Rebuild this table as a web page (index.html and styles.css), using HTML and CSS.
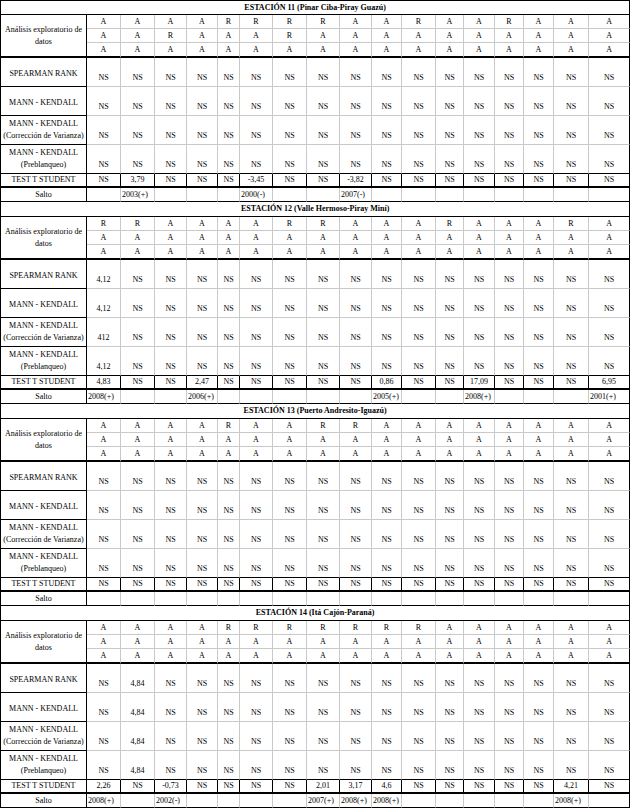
FILE: index.html
```html
<!DOCTYPE html>
<html lang="es">
<head>
<meta charset="utf-8">
<title>Estaciones</title>
<link rel="stylesheet" href="styles.css">
</head>
<body>
<table class="sheet">
<colgroup><col class="w86"><col class="w34"><col class="w34"><col class="w32"><col class="w31"><col class="w22"><col class="w33"><col class="w34"><col class="w33"><col class="w32"><col class="w30"><col class="w34"><col class="w28"><col class="w31"><col class="w29"><col class="w30"><col class="w35"><col class="w41"></colgroup>
<tbody>
<!-- ESTACIÓN 11 -->
<tr class="title first"><td colspan="18">ESTACIÓN 11 (Pinar Ciba-Piray Guazú)</td></tr>
<tr class="ar"><td class="lab span" rowspan="3">Análisis exploratorio de datos</td><td>A</td><td>A</td><td>A</td><td>A</td><td>R</td><td>R</td><td>R</td><td>R</td><td>A</td><td>A</td><td>R</td><td>A</td><td>A</td><td>R</td><td>A</td><td>A</td><td>A</td></tr>
<tr class="ar"><td>A</td><td>A</td><td>R</td><td>A</td><td>A</td><td>A</td><td>R</td><td>A</td><td>A</td><td>A</td><td>A</td><td>A</td><td>A</td><td>A</td><td>A</td><td>A</td><td>A</td></tr>
<tr class="ar ar3"><td>A</td><td>A</td><td>A</td><td>A</td><td>A</td><td>A</td><td>A</td><td>A</td><td>A</td><td>A</td><td>A</td><td>A</td><td>A</td><td>A</td><td>A</td><td>A</td><td>A</td></tr>
<tr class="mr"><td class="lab one">SPEARMAN RANK</td><td>NS</td><td>NS</td><td>NS</td><td>NS</td><td>NS</td><td>NS</td><td>NS</td><td>NS</td><td>NS</td><td>NS</td><td>NS</td><td>NS</td><td>NS</td><td>NS</td><td>NS</td><td>NS</td><td>NS</td></tr>
<tr class="mr"><td class="lab one">MANN - KENDALL</td><td>NS</td><td>NS</td><td>NS</td><td>NS</td><td>NS</td><td>NS</td><td>NS</td><td>NS</td><td>NS</td><td>NS</td><td>NS</td><td>NS</td><td>NS</td><td>NS</td><td>NS</td><td>NS</td><td>NS</td></tr>
<tr class="mr"><td class="lab">MANN - KENDALL<br>(Corrección de Varianza)</td><td>NS</td><td>NS</td><td>NS</td><td>NS</td><td>NS</td><td>NS</td><td>NS</td><td>NS</td><td>NS</td><td>NS</td><td>NS</td><td>NS</td><td>NS</td><td>NS</td><td>NS</td><td>NS</td><td>NS</td></tr>
<tr class="mr pb"><td class="lab">MANN - KENDALL<br>(Preblanqueo)</td><td>NS</td><td>NS</td><td>NS</td><td>NS</td><td>NS</td><td>NS</td><td>NS</td><td>NS</td><td>NS</td><td>NS</td><td>NS</td><td>NS</td><td>NS</td><td>NS</td><td>NS</td><td>NS</td><td>NS</td></tr>
<tr class="tt"><td class="lab">TEST T STUDENT</td><td>NS</td><td>3,79</td><td>NS</td><td>NS</td><td>NS</td><td>-3,45</td><td>NS</td><td>NS</td><td>-3,82</td><td>NS</td><td>NS</td><td>NS</td><td>NS</td><td>NS</td><td>NS</td><td>NS</td><td>NS</td></tr>
<tr class="sa"><td class="lab">Salto</td><td></td><td>2003(+)</td><td></td><td></td><td></td><td>2000(-)</td><td></td><td></td><td>2007(-)</td><td></td><td></td><td></td><td></td><td></td><td></td><td></td><td></td></tr>
<!-- ESTACIÓN 12 -->
<tr class="title"><td colspan="18">ESTACIÓN 12 (Valle Hermoso-Piray Miní)</td></tr>
<tr class="ar"><td class="lab span" rowspan="3">Análisis exploratorio de datos</td><td>R</td><td>R</td><td>A</td><td>A</td><td>A</td><td>A</td><td>R</td><td>R</td><td>A</td><td>A</td><td>A</td><td>R</td><td>A</td><td>A</td><td>A</td><td>R</td><td>A</td></tr>
<tr class="ar"><td>A</td><td>A</td><td>A</td><td>A</td><td>A</td><td>A</td><td>A</td><td>A</td><td>A</td><td>A</td><td>A</td><td>A</td><td>A</td><td>A</td><td>A</td><td>A</td><td>A</td></tr>
<tr class="ar ar3"><td>A</td><td>A</td><td>A</td><td>A</td><td>A</td><td>A</td><td>A</td><td>A</td><td>A</td><td>A</td><td>A</td><td>A</td><td>A</td><td>A</td><td>A</td><td>A</td><td>A</td></tr>
<tr class="mr"><td class="lab one">SPEARMAN RANK</td><td>4,12</td><td>NS</td><td>NS</td><td>NS</td><td>NS</td><td>NS</td><td>NS</td><td>NS</td><td>NS</td><td>NS</td><td>NS</td><td>NS</td><td>NS</td><td>NS</td><td>NS</td><td>NS</td><td>NS</td></tr>
<tr class="mr"><td class="lab one">MANN - KENDALL</td><td>4,12</td><td>NS</td><td>NS</td><td>NS</td><td>NS</td><td>NS</td><td>NS</td><td>NS</td><td>NS</td><td>NS</td><td>NS</td><td>NS</td><td>NS</td><td>NS</td><td>NS</td><td>NS</td><td>NS</td></tr>
<tr class="mr"><td class="lab">MANN - KENDALL<br>(Corrección de Varianza)</td><td>412</td><td>NS</td><td>NS</td><td>NS</td><td>NS</td><td>NS</td><td>NS</td><td>NS</td><td>NS</td><td>NS</td><td>NS</td><td>NS</td><td>NS</td><td>NS</td><td>NS</td><td>NS</td><td>NS</td></tr>
<tr class="mr pb"><td class="lab">MANN - KENDALL<br>(Preblanqueo)</td><td>4,12</td><td>NS</td><td>NS</td><td>NS</td><td>NS</td><td>NS</td><td>NS</td><td>NS</td><td>NS</td><td>NS</td><td>NS</td><td>NS</td><td>NS</td><td>NS</td><td>NS</td><td>NS</td><td>NS</td></tr>
<tr class="tt"><td class="lab">TEST T STUDENT</td><td>4,83</td><td>NS</td><td>NS</td><td>2,47</td><td>NS</td><td>NS</td><td>NS</td><td>NS</td><td>NS</td><td>0,86</td><td>NS</td><td>NS</td><td>17,09</td><td>NS</td><td>NS</td><td>NS</td><td>6,95</td></tr>
<tr class="sa"><td class="lab">Salto</td><td>2008(+)</td><td></td><td></td><td>2006(+)</td><td></td><td></td><td></td><td></td><td></td><td>2005(+)</td><td></td><td></td><td>2008(+)</td><td></td><td></td><td></td><td>2001(+)</td></tr>
<!-- ESTACIÓN 13 -->
<tr class="title"><td colspan="18">ESTACIÓN 13 (Puerto Andresito-Iguazú)</td></tr>
<tr class="ar"><td class="lab span" rowspan="3">Análisis exploratorio de datos</td><td>A</td><td>A</td><td>A</td><td>A</td><td>R</td><td>A</td><td>A</td><td>R</td><td>R</td><td>A</td><td>A</td><td>A</td><td>A</td><td>A</td><td>A</td><td>A</td><td>A</td></tr>
<tr class="ar"><td>A</td><td>A</td><td>A</td><td>A</td><td>A</td><td>A</td><td>A</td><td>A</td><td>A</td><td>A</td><td>A</td><td>A</td><td>A</td><td>A</td><td>A</td><td>A</td><td>A</td></tr>
<tr class="ar ar3"><td>A</td><td>A</td><td>A</td><td>A</td><td>A</td><td>A</td><td>A</td><td>A</td><td>A</td><td>A</td><td>A</td><td>A</td><td>A</td><td>A</td><td>A</td><td>A</td><td>A</td></tr>
<tr class="mr"><td class="lab one">SPEARMAN RANK</td><td>NS</td><td>NS</td><td>NS</td><td>NS</td><td>NS</td><td>NS</td><td>NS</td><td>NS</td><td>NS</td><td>NS</td><td>NS</td><td>NS</td><td>NS</td><td>NS</td><td>NS</td><td>NS</td><td>NS</td></tr>
<tr class="mr"><td class="lab one">MANN - KENDALL</td><td>NS</td><td>NS</td><td>NS</td><td>NS</td><td>NS</td><td>NS</td><td>NS</td><td>NS</td><td>NS</td><td>NS</td><td>NS</td><td>NS</td><td>NS</td><td>NS</td><td>NS</td><td>NS</td><td>NS</td></tr>
<tr class="mr"><td class="lab">MANN - KENDALL<br>(Corrección de Varianza)</td><td>NS</td><td>NS</td><td>NS</td><td>NS</td><td>NS</td><td>NS</td><td>NS</td><td>NS</td><td>NS</td><td>NS</td><td>NS</td><td>NS</td><td>NS</td><td>NS</td><td>NS</td><td>NS</td><td>NS</td></tr>
<tr class="mr pb"><td class="lab">MANN - KENDALL<br>(Preblanqueo)</td><td>NS</td><td>NS</td><td>NS</td><td>NS</td><td>NS</td><td>NS</td><td>NS</td><td>NS</td><td>NS</td><td>NS</td><td>NS</td><td>NS</td><td>NS</td><td>NS</td><td>NS</td><td>NS</td><td>NS</td></tr>
<tr class="tt"><td class="lab">TEST T STUDENT</td><td>NS</td><td>NS</td><td>NS</td><td>NS</td><td>NS</td><td>NS</td><td>NS</td><td>NS</td><td>NS</td><td>NS</td><td>NS</td><td>NS</td><td>NS</td><td>NS</td><td>NS</td><td>NS</td><td>NS</td></tr>
<tr class="sa"><td class="lab">Salto</td><td></td><td></td><td></td><td></td><td></td><td></td><td></td><td></td><td></td><td></td><td></td><td></td><td></td><td></td><td></td><td></td><td></td></tr>
<!-- ESTACIÓN 14 -->
<tr class="title"><td colspan="18">ESTACIÓN 14 (Itá Cajón-Paraná)</td></tr>
<tr class="ar"><td class="lab span" rowspan="3">Análisis exploratorio de datos</td><td>A</td><td>A</td><td>A</td><td>A</td><td>R</td><td>R</td><td>R</td><td>R</td><td>R</td><td>R</td><td>R</td><td>A</td><td>A</td><td>A</td><td>A</td><td>A</td><td>A</td></tr>
<tr class="ar"><td>A</td><td>A</td><td>A</td><td>A</td><td>A</td><td>A</td><td>A</td><td>A</td><td>A</td><td>A</td><td>A</td><td>A</td><td>A</td><td>A</td><td>A</td><td>A</td><td>A</td></tr>
<tr class="ar ar3"><td>A</td><td>A</td><td>A</td><td>A</td><td>A</td><td>A</td><td>A</td><td>A</td><td>A</td><td>A</td><td>A</td><td>A</td><td>A</td><td>A</td><td>A</td><td>A</td><td>A</td></tr>
<tr class="mr"><td class="lab one">SPEARMAN RANK</td><td>NS</td><td>4,84</td><td>NS</td><td>NS</td><td>NS</td><td>NS</td><td>NS</td><td>NS</td><td>NS</td><td>NS</td><td>NS</td><td>NS</td><td>NS</td><td>NS</td><td>NS</td><td>NS</td><td>NS</td></tr>
<tr class="mr"><td class="lab one">MANN - KENDALL</td><td>NS</td><td>4,84</td><td>NS</td><td>NS</td><td>NS</td><td>NS</td><td>NS</td><td>NS</td><td>NS</td><td>NS</td><td>NS</td><td>NS</td><td>NS</td><td>NS</td><td>NS</td><td>NS</td><td>NS</td></tr>
<tr class="mr"><td class="lab">MANN - KENDALL<br>(Corrección de Varianza)</td><td>NS</td><td>4,84</td><td>NS</td><td>NS</td><td>NS</td><td>NS</td><td>NS</td><td>NS</td><td>NS</td><td>NS</td><td>NS</td><td>NS</td><td>NS</td><td>NS</td><td>NS</td><td>NS</td><td>NS</td></tr>
<tr class="mr pb"><td class="lab">MANN - KENDALL<br>(Preblanqueo)</td><td>NS</td><td>4,84</td><td>NS</td><td>NS</td><td>NS</td><td>NS</td><td>NS</td><td>NS</td><td>NS</td><td>NS</td><td>NS</td><td>NS</td><td>NS</td><td>NS</td><td>NS</td><td>NS</td><td>NS</td></tr>
<tr class="tt"><td class="lab">TEST T STUDENT</td><td>2,26</td><td>NS</td><td>-0,73</td><td>NS</td><td>NS</td><td>NS</td><td>NS</td><td>2,01</td><td>3,17</td><td>4,6</td><td>NS</td><td>NS</td><td>NS</td><td>NS</td><td>NS</td><td>4,21</td><td>NS</td></tr>
<tr class="sa"><td class="lab">Salto</td><td>2008(+)</td><td></td><td>2002(-)</td><td></td><td></td><td></td><td></td><td>2007(+)</td><td>2008(+)</td><td>2008(+)</td><td></td><td></td><td></td><td></td><td></td><td>2008(+)</td><td></td></tr>
</tbody>
</table>
</body>
</html>
```

FILE: styles.css
```css
html, body {
  margin: 0;
  padding: 0;
  background: #ffffff;
}

body {
  font-family: "Liberation Serif", "Times New Roman", serif;
  font-size: 8px;
  color: #000000;
}

.sheet {
  border-collapse: separate;
  border-spacing: 0;
  table-layout: fixed;
  width: 630px;
  border-left: 1px solid #000000;
  border-top: 1px solid #000000;
}

.w86 { width: 86px; }
.w41 { width: 41px; }
.w35 { width: 35px; }
.w34 { width: 34px; }
.w33 { width: 33px; }
.w32 { width: 32px; }
.w31 { width: 31px; }
.w30 { width: 30px; }
.w29 { width: 29px; }
.w28 { width: 28px; }
.w22 { width: 22px; }

.sheet td {
  padding: 0;
  border-right: 1px solid #c9c9c9;
  border-bottom: 1px solid #c9c9c9;
  text-align: center;
  line-height: 12px;
  white-space: nowrap;
  overflow: hidden;
  vertical-align: middle;
}

.sheet td:last-child {
  border-right-color: #000000;
}

.sheet td.lab {
  border-right-color: #000000;
  border-bottom-color: #000000;
  white-space: normal;
  vertical-align: middle;
}

.sheet td.span {
  border-bottom: 2px solid #000000;
}

tr.title { height: 15px; }
tr.title.first { height: 14px; }

tr.title td {
  font-weight: bold;
  border-right-color: #000000;
  border-bottom-color: #000000;
}

tr.ar { height: 14px; }
tr.ar3 { height: 15px; }

tr.ar3 td {
  border-bottom: 2px solid #000000;
}

tr.mr { height: 29px; }

tr.mr td {
  vertical-align: bottom;
  padding-bottom: 2px;
}

tr.mr td.lab {
  vertical-align: middle;
  padding-bottom: 0;
}

tr.mr td.one {
  padding-top: 3px;
}

tr.pb td {
  border-bottom-color: #000000;
}

tr.tt { height: 14px; }

tr.tt td {
  border-right-color: #000000;
  border-bottom: 2px solid #000000;
}

tr.sa { height: 14px; }

tr.sa td {
  border-bottom-color: #000000;
  text-align: left;
  padding-left: 1px;
}

tr.sa td.lab {
  text-align: center;
  padding-left: 0;
}
```
